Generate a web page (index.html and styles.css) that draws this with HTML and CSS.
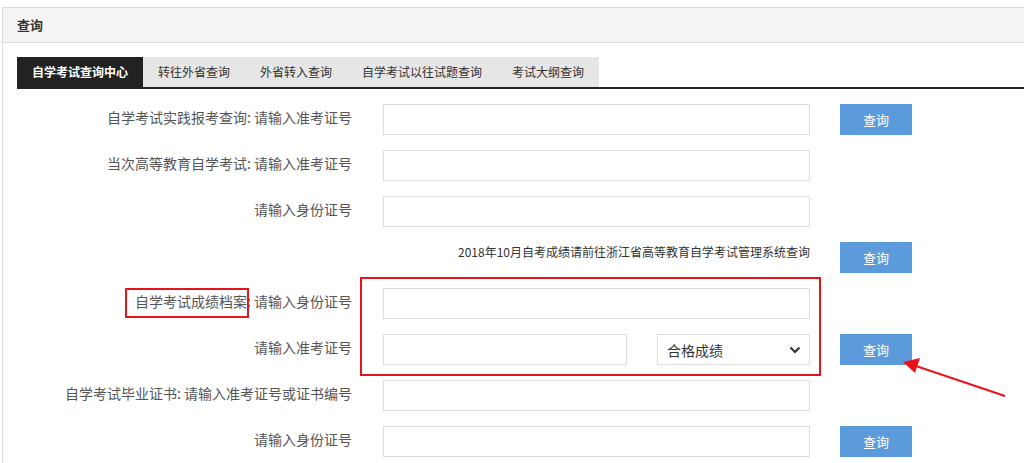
FILE: index.html
```html
<!DOCTYPE html>
<html lang="zh-CN">
<head>
<meta charset="utf-8">
<title>查询</title>
<link rel="stylesheet" href="styles.css">
</head>
<body>
<div class="panel">
  <div class="panel-head">查询</div>
  <div class="panel-body">
    <div class="tabs">
      <div class="tab active">自学考试查询中心</div>
      <div class="tab">转往外省查询</div>
      <div class="tab">外省转入查询</div>
      <div class="tab">自学考试以往试题查询</div>
      <div class="tab">考试大纲查询</div>
    </div>
    <div class="form">
      <label class="lbl">自学考试实践报考查询: 请输入准考证号</label>
      <input class="inp" type="text">
      <button class="btn">查询</button>

      <label class="lbl">当次高等教育自学考试: 请输入准考证号</label>
      <input class="inp" type="text">
      <span></span>

      <label class="lbl">请输入身份证号</label>
      <input class="inp" type="text">
      <span></span>

      <span></span>
      <div class="notice">2018年10月自考成绩请前往浙江省高等教育自学考试管理系统查询</div>
      <button class="btn">查询</button>

      <label class="lbl">自学考试成绩档案: 请输入身份证号</label>
      <input class="inp" type="text">
      <span></span>

      <label class="lbl">请输入准考证号</label>
      <div class="pair">
        <input class="inp short" type="text">
        <div class="sel-wrap">
          <select class="sel"><option>合格成绩</option></select>
          <svg class="chev" width="12" height="8" viewBox="0 0 12 8"><path d="M1.5 1.5 L6 6 L10.5 1.5" fill="none" stroke="#333" stroke-width="2.2"/></svg>
        </div>
      </div>
      <button class="btn">查询</button>

      <label class="lbl">自学考试毕业证书: 请输入准考证号或证书编号</label>
      <input class="inp" type="text">
      <span></span>

      <label class="lbl">请输入身份证号</label>
      <input class="inp" type="text">
      <button class="btn">查询</button>
    </div>
  </div>
</div>

<div class="mark mark-group"></div>
<div class="mark mark-label"></div>
<svg class="arrow" width="1024" height="463" viewBox="0 0 1024 463">
  <line x1="1005" y1="396" x2="916" y2="366" stroke="#e8141b" stroke-width="2"/>
  <polygon points="903,362 920,358 915,373" fill="#e8141b"/>
</svg>
</body>
</html>
```
FILE: styles.css
```css
* { box-sizing: border-box; }
html, body { margin: 0; padding: 0; }
body {
  background: #fff;
  font-family: "Noto Sans CJK SC", "Microsoft YaHei", sans-serif;
  color: #555;
  overflow: hidden;
  height: 463px;
  position: relative;
}
.panel {
  margin: 7px 0 0 2px;
  border-left: 1px solid #ddd;
  border-top: 1px solid #ddd;
  height: 460px;
}
.panel-head {
  height: 35px;
  background: #f4f4f4;
  border-bottom: 1px solid #ddd;
  padding-left: 14px;
  line-height: 34px;
  font-size: 13px;
  font-weight: bold;
  color: #333;
}
.panel-body {
  padding: 14px 0 0 14px;
}
.tabs {
  display: flex;
  border-bottom: 2px solid #222;
}
.tab {
  height: 30px;
  line-height: 30px;
  padding: 0 15px;
  background: #e6e6e6;
  font-size: 12px;
  color: #333;
}
.tab.active {
  background: #222;
  color: #fff;
  font-weight: bold;
}
.form {
  margin-top: 15px;
  display: grid;
  grid-template-columns: 336px 427px 72px;
  grid-auto-rows: 31px;
  column-gap: 30px;
  row-gap: 15px;
  align-items: center;
}
.lbl {
  text-align: right;
  font-size: 14px;
  color: #555;
  white-space: nowrap;
  line-height: 20px;
  margin-top: -6px;
  padding-right: 1px;
}
.inp {
  height: 31px;
  width: 100%;
  border: 1px solid #ddd;
  background: #fff;
  margin: 0;
  padding: 0 8px;
  font: inherit;
  outline: none;
}
.btn {
  height: 31px;
  width: 72px;
  border: none;
  margin: 0;
  background: #5b9bdb;
  color: #fff;
  font-family: inherit;
  font-size: 13px;
  padding: 0;
}
.notice {
  text-align: right;
  font-size: 12px;
  color: #333;
  white-space: nowrap;
  margin-top: -13px;
}
.pair {
  display: flex;
  gap: 30px;
  height: 31px;
}
.inp.short { width: 244px; flex: none; }
.sel-wrap {
  position: relative;
  flex: 1;
}
.sel {
  -webkit-appearance: none;
  appearance: none;
  width: 100%;
  height: 31px;
  border: 1px solid #ddd;
  background: #fff;
  margin: 0;
  padding: 0 0 0 9px;
  font-family: inherit;
  font-size: 14px;
  color: #333;
  outline: none;
}
.chev {
  position: absolute;
  right: 9px;
  top: 12px;
  pointer-events: none;
}
.mark {
  position: absolute;
  border: 2px solid #e8141b;
  pointer-events: none;
}
.mark-group { left: 360px; top: 277px; width: 461px; height: 99px; }
.mark-label { left: 125px; top: 288px; width: 124px; height: 30px; }
.arrow { position: absolute; left: 0; top: 0; pointer-events: none; }
```
